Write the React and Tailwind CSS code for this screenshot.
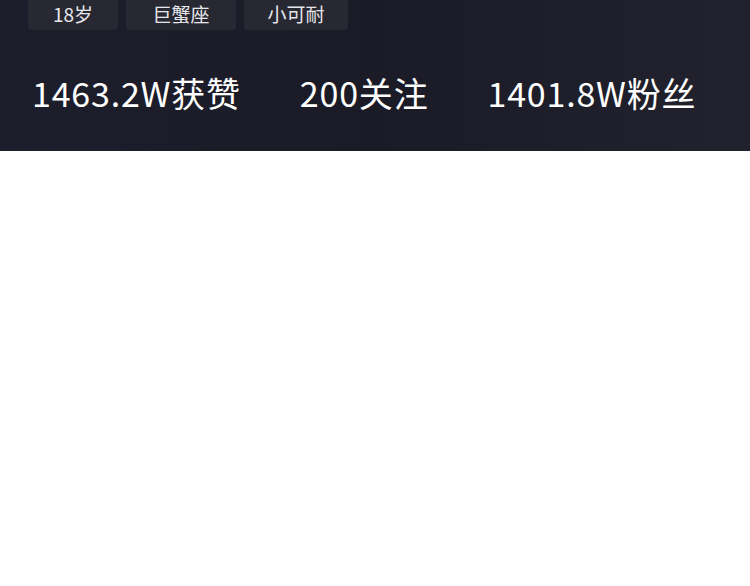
import React from 'react';

const tags = [
  { label: '18岁', w: 'w-[90px]' },
  { label: '巨蟹座', w: 'w-[110px]' },
  { label: '小可耐', w: 'w-[104px]' },
];

const stats = ['1463.2W获赞', '200关注', '1401.8W粉丝'];

const App = () => {
  return (
    <div className="w-[750px] h-[586px] bg-white overflow-hidden" style={{ fontFamily: '"Noto Sans CJK SC", "Noto Sans", sans-serif' }}>
      <div className="h-[151px] bg-gradient-to-r from-[#1d1e2b] via-[#1a1b27] to-[#21222d] overflow-hidden">
        {/* Tags row, partly scrolled off the top */}
        <div className="flex gap-2 pl-[28px] -mt-[10px]">
          {tags.map((t) => (
            <div
              key={t.label}
              className={`${t.w} h-[40px] rounded-[4px] bg-[#282833] flex items-center justify-center pt-[8px] text-[19px] text-[#e6e6ea]`}
            >
              {t.label}
            </div>
          ))}
        </div>

        {/* Stats */}
        <div className="flex items-center gap-[59px] pl-[32px] mt-[46px]">
          {stats.map((s) => (
            <span key={s} className="text-[34px] leading-none tracking-[0.8px] text-white">
              {s}
            </span>
          ))}
        </div>
      </div>
    </div>
  );
};

export default App;
